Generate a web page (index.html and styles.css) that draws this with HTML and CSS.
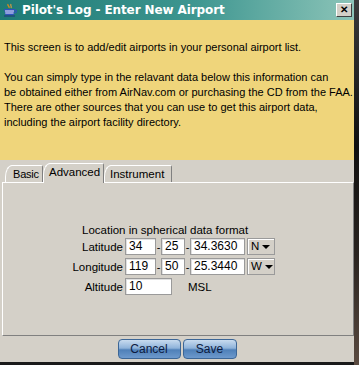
FILE: index.html
```html
<!DOCTYPE html>
<html>
<head>
<meta charset="utf-8">
<link rel="stylesheet" href="styles.css">
</head>
<body>
<div class="screen">
  <div class="window">
    <div class="titlebar">
      <svg class="appicon" width="14" height="14" viewBox="0 0 14 14">
        <path d="M5 1 C4 3 7 3 6 5" stroke="#d08a20" stroke-width="1.3" fill="none"/>
        <path d="M8 1 C7 3 9 3 8 5" stroke="#e0a040" stroke-width="1.1" fill="none"/>
        <path d="M1 6 H12 L10.5 12 H2.5 Z" fill="#3050c0"/>
        <path d="M2 8 H11 M2.3 10 H10.6" stroke="#ffffff" stroke-width="0.9"/>
        <path d="M12 7 C14 7 14 10 11 10" stroke="#3050c0" stroke-width="1.2" fill="none"/>
        <path d="M1 13 H12" stroke="#203080" stroke-width="1"/>
      </svg>
      <span class="title">Pilot's Log - Enter New Airport</span>
      <div class="closebtn">✕</div>
    </div>
    <div class="info">
      <p>This screen is to add/edit airports in your personal airport list.</p>
      <p>You can simply type in the relavant data below this information can<br>be obtained either from AirNav.com or purchasing the CD from the FAA.<br>There are other sources that you can use to get this airport data,<br>including the airport facility directory.</p>
    </div>
    <div class="tabs">
      <div class="tab basic">Basic</div>
      <div class="tab active">Advanced</div>
      <div class="tab instrument">Instrument</div>
    </div>
    <div class="panel">
      <div class="caption">Location in spherical data format</div>
      <div class="row">
        <span class="label">Latitude</span>
        <span class="field w1">34</span><span class="dash">-</span>
        <span class="field w2">25</span><span class="dash">-</span>
        <span class="field w3">34.3630</span>
        <span class="combo">N<span class="arrow"></span></span>
      </div>
      <div class="row">
        <span class="label">Longitude</span>
        <span class="field w1">119</span><span class="dash">-</span>
        <span class="field w2">50</span><span class="dash">-</span>
        <span class="field w3">25.3440</span>
        <span class="combo">W<span class="arrow"></span></span>
      </div>
      <div class="row">
        <span class="label">Altitude</span>
        <span class="field w4">10</span>
        <span class="unit">MSL</span>
      </div>
    </div>
    <div class="buttons">
      <div class="btn cancel">Cancel</div>
      <div class="btn save">Save</div>
    </div>
  </div>
  <div class="frame"></div>
</div>
</body>
</html>
```
FILE: styles.css
```css
html, body {
  margin: 0;
  padding: 0;
}
body {
  width: 359px;
  height: 365px;
  background: #1a1a1a;
  overflow: hidden;
  font-family: "Liberation Sans", Arial, sans-serif;
}
.screen {
  display: flex;
  width: 359px;
  height: 365px;
}
.window {
  width: 354px;
  height: 362px;
  background: #d4d0c8;
  display: flex;
  flex-direction: column;
  flex: none;
}
.frame {
  flex: 1;
  background: linear-gradient(#3a3a3a, #101010 40%, #2a2420 70%, #5a4a40);
}
.titlebar {
  height: 20px;
  background: linear-gradient(to right, #1e7a75, #3e9690 55%, #8cc4b8);
  display: flex;
  align-items: center;
  padding-left: 3px;
  box-sizing: border-box;
}
.appicon {
  flex: none;
}
.title {
  color: #ffffff;
  font-family: "DejaVu Sans", Verdana, sans-serif;
  font-weight: bold;
  font-size: 12px;
  margin-left: 5px;
  flex: 1;
  letter-spacing: -0.1px;
}
.closebtn {
  width: 16px;
  height: 14px;
  box-sizing: border-box;
  background: #d4d0c8;
  border: 1px solid;
  border-color: #ffffff #404040 #404040 #ffffff;
  font-size: 10px;
  font-weight: bold;
  line-height: 12px;
  text-align: center;
  color: #000;
  margin-right: 2px;
}
.info {
  height: 140px;
  background: #efd57b;
  box-sizing: border-box;
  padding: 20px 4px 0 4px;
  font-size: 11px;
  line-height: 15px;
  color: #000;
  white-space: nowrap;
}
.info p {
  margin: 0 0 15px 0;
}
.tabs {
  height: 22px;
  display: flex;
  align-items: flex-end;
  padding-left: 5px;
  position: relative;
  z-index: 1;
}
.tab {
  height: 17px;
  box-sizing: border-box;
  border: 1px solid #ffffff;
  border-right-color: #808080;
  border-bottom: none;
  border-top-left-radius: 7px 12px;
  border-top-right-radius: 2px;
  font-size: 11px;
  line-height: 16px;
  padding: 0 0 0 7px;
  color: #000;
  background: #d4d0c8;
  white-space: nowrap;
}
.tab.basic {
  width: 38px;
  letter-spacing: -0.2px;
}
.tab.active {
  width: 61px;
  height: 20px;
  margin-bottom: -1px;
  line-height: 16px;
  padding-left: 5px;
  font-size: 11.5px;
}
.tab.instrument {
  width: 68px;
  padding-left: 5px;
  font-size: 11.5px;
}
.panel {
  height: 154px;
  margin-left: 2px;
  box-sizing: border-box;
  border: 1px solid;
  border-color: #ffffff #808080 #808080 #ffffff;
  padding-top: 40px;
  font-size: 11.5px;
  color: #000;
}
.caption {
  padding-left: 79px;
  line-height: 15px;
  height: 15px;
}
.row {
  display: flex;
  align-items: center;
  height: 17px;
  margin-top: 3px;
}
.row:nth-of-type(2) {
  margin-top: 0;
}
.label {
  width: 120px;
  text-align: right;
  margin-right: 2px;
}
.field {
  height: 17px;
  box-sizing: border-box;
  background: #ffffff;
  border: 1px solid #9a9a9a;
  box-shadow: inset 1px 1px 0 #e0e0e0;
  padding-left: 3px;
  line-height: 15px;
  font-size: 12px;
}
.w1 { width: 31px; }
.w2 { width: 24px; }
.w3 { width: 55px; }
.w4 { width: 47px; }
.dash {
  width: 5px;
  text-align: center;
  font-size: 11px;
}
.combo {
  margin-left: 2px;
  width: 28px;
  height: 17px;
  box-sizing: border-box;
  border: 1px solid #9a9a9a;
  box-shadow: inset 1px 1px 0 #ffffff;
  padding-left: 3px;
  line-height: 15px;
  display: flex;
  align-items: center;
  gap: 3px;
}
.arrow {
  width: 0;
  height: 0;
  border-left: 4px solid transparent;
  border-right: 4px solid transparent;
  border-top: 4px solid #000;
}
.unit {
  margin-left: 16px;
}
.buttons {
  flex: 1;
  display: flex;
  justify-content: center;
  align-items: flex-start;
  padding-top: 3px;
  gap: 2px;
}
.btn {
  height: 20px;
  box-sizing: border-box;
  border: 1px solid #3c6696;
  border-radius: 4px;
  background: linear-gradient(#c8dbef, #8fb3da 45%, #4f80b8 55%, #6d99cc);
  color: #0c1a40;
  font-size: 12px;
  line-height: 18px;
  text-align: center;
}
.cancel { width: 63px; }
.save { width: 54px; }
```
